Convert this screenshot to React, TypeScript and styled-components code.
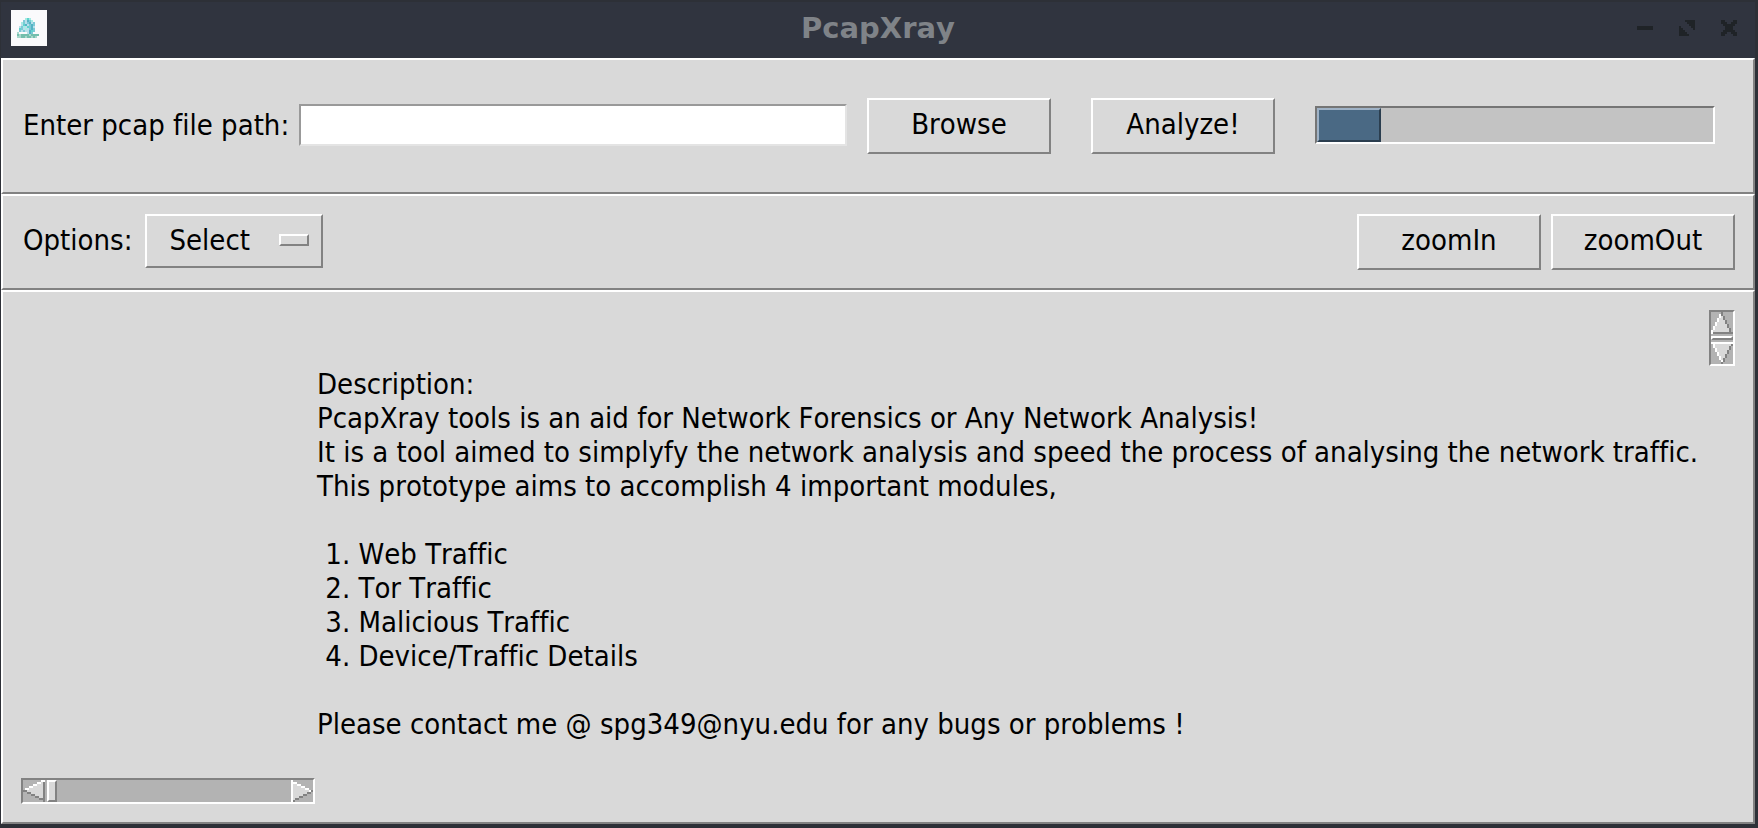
import React from "react";
import styled, { createGlobalStyle, css } from "styled-components";

const color = {
  chrome: "#30343f",
  frame: "#2d3037",
  glyph: "#1f2327",
  title: "#7f8388",
  face: "#d9d9d9",
  light: "#ffffff",
  shade: "#828282",
  trough: "#b3b3b3",
};

const GlobalStyle = createGlobalStyle`
  *, *::before, *::after { box-sizing: border-box; }
  body { margin: 0; background: ${color.frame}; }
  button, input, select {
    font: inherit;
    font-kerning: inherit;
    font-variant-ligatures: inherit;
    color: inherit;
    margin: 0;
    border-radius: 0;
  }
`;

const raised = css`
  border: 2px solid;
  border-color: ${color.light} ${color.shade} ${color.shade} ${color.light};
`;

const sunken = css`
  border: 2px solid;
  border-color: ${color.shade} ${color.light} ${color.light} ${color.shade};
`;

const Window = styled.div`
  display: flex;
  flex-direction: column;
  min-height: 100vh;
  padding: 0 3px 4px 1px;
  background: ${color.frame};
  font: 29px/34px "DejaVu Sans Condensed", "DejaVu Sans", sans-serif;
  font-kerning: none;
  font-variant-ligatures: none;
  color: #000;
`;

const TitleBar = styled.header`
  display: grid;
  grid-template-columns: 1fr auto 1fr;
  align-items: center;
  height: 58px;
  padding: 0 10px 2px;
  background: ${color.chrome};
  box-shadow: inset 0 2px ${color.frame};
`;

const Title = styled.h1`
  margin: 0;
  font-family: "DejaVu Sans", sans-serif;
  font-size: 29px;
  line-height: 34px;
  font-weight: bold;
  color: ${color.title};
`;

const AppIcon = styled.svg`
  display: block;
  width: 36px;
  height: 36px;
  background: #fafafc;
`;

const WindowControls = styled.div`
  display: flex;
  justify-content: flex-end;
  gap: 26px;
  padding-right: 8px;
`;

const ControlButton = styled.button`
  width: 16px;
  height: 16px;
  padding: 0;
  border: 0;
  background: none;

  svg {
    display: block;
    fill: ${color.glyph};
  }
`;

const Panel = styled.section`
  ${raised}
  background: ${color.face};
`;

const FilePanel = styled(Panel)`
  display: flex;
  align-items: center;
  padding: 38px 38px 38px 20px;
`;

const OptionsPanel = styled(Panel)`
  display: flex;
  align-items: flex-start;
  justify-content: space-between;
  padding: 18px 18px 18px 20px;
`;

const ContentPanel = styled(Panel)`
  display: grid;
  flex: 1;
  grid-template-columns: 294px 1fr 26px;
  grid-template-rows: 1fr auto;
  padding: 18px;
`;

const Label = styled.label`
  padding-bottom: 2px;
  margin-right: 10px;
  white-space: nowrap;
`;

const PathInput = styled.input`
  flex: 1;
  min-width: 100px;
  height: 42px;
  margin: 0 20px 2px 0;
  padding: 0 4px;
  background: #fff;
  border: 2px solid;
  border-color: #999 #e4e4e4 #e4e4e4 #999;
  outline: none;
`;

const Button = styled.button`
  ${raised}
  width: 184px;
  height: 56px;
  padding: 0 0 4px;
  background: ${color.face};
`;

const FileActions = styled.div`
  display: flex;
  gap: 40px;
  margin-right: 40px;
`;

const ProgressTrough = styled.div`
  width: 400px;
  height: 38px;
  margin-bottom: 2px;
  background: #c3c3c3;
  border: 2px solid;
  border-color: #757575 #fff #fff #757575;
`;

const ProgressBar = styled.div`
  height: 100%;
  background: #4a6984;
  border: 2px solid;
  border-color: #9fb2c6 #2b3e4f #2b3e4f #9fb2c6;
`;

const OptionField = styled.div`
  display: flex;
  align-items: center;
  gap: 3px;
`;

const SelectBox = styled.div`
  position: relative;

  &::after {
    ${raised}
    content: "";
    position: absolute;
    top: 20px;
    right: 14px;
    width: 30px;
    height: 12px;
    pointer-events: none;
  }
`;

const Select = styled.select`
  ${raised}
  display: block;
  appearance: none;
  width: 178px;
  height: 54px;
  padding: 0 44px 2px 22px;
  background: ${color.face};
`;

const ZoomActions = styled.div`
  display: flex;
  gap: 10px;
`;

const Description = styled.div`
  grid-column: 2;
  padding: 57px 0 34px 2px;
  white-space: pre;

  p, ol {
    margin: 0;
    padding: 0;
  }

  ol {
    margin: 34px 0;
    list-style: none;
  }
`;

const ScrollBar = styled.div<{ $vertical?: boolean }>`
  ${sunken}
  display: flex;
  flex-direction: ${(p) => (p.$vertical ? "column" : "row")};
  justify-content: space-between;
  width: ${(p) => (p.$vertical ? "26px" : "294px")};
  height: ${(p) => (p.$vertical ? "56px" : "26px")};
  background: ${color.trough};
`;

const ScrollButton = styled.button`
  display: block;
  width: 22px;
  height: 22px;
  padding: 0;
  border: 0;
  background: none;

  svg {
    display: block;
  }
`;

const ScrollTrack = styled.div<{ $vertical?: boolean }>`
  flex: 1;
  padding: ${(p) => (p.$vertical ? "2px 0" : "0 2px")};
`;

const ScrollThumb = styled.div<{ $vertical?: boolean }>`
  ${raised}
  width: ${(p) => (p.$vertical ? "22px" : "10px")};
  height: ${(p) => (p.$vertical ? "4px" : "22px")};
  background: ${color.face};
`;

type Direction = "up" | "down" | "left" | "right";

/* Bevelled arrow on an 11x11 grid; left and right are the transposed up and down. */
function Arrow({ direction }: { direction: Direction }) {
  const opensToEnd = direction === "up" || direction === "left";
  const transposed = direction === "left" || direction === "right";
  const rows = Array.from({ length: 10 }, (_, i) => i + 1);
  return (
    <svg width="22" height="22" viewBox="0 0 11 11" shapeRendering="crispEdges" aria-hidden="true">
      <g transform={transposed ? "matrix(0 1 1 0 0 0)" : undefined}>
        {rows.map((r) => {
          const left = opensToEnd ? 5 - Math.ceil(r / 2) : Math.ceil(r / 2);
          const right = opensToEnd ? 5 + Math.floor(r / 2) : 10 - Math.floor(r / 2);
          return (
            <g key={r}>
              <rect x={left} y={r} width={right - left + 1} height="1" fill={color.face} />
              <rect x={left} y={r} width="1" height="1" fill={color.light} />
              <rect x={right} y={r} width="1" height="1" fill={color.shade} />
            </g>
          );
        })}
        {opensToEnd ? (
          <>
            <rect x="5" y="0" width="1" height="1" fill={color.shade} />
            <rect x="1" y="10" width="10" height="1" fill={color.shade} />
          </>
        ) : (
          <rect x="0" y="0" width="11" height="1" fill={color.light} />
        )}
      </g>
    </svg>
  );
}

const logoPalette: Record<string, string> = {
  a: "#a5ece4",
  b: "#7cc9d6",
  c: "#b9dfea",
  d: "#55b3c4",
  e: "#5fd3cd",
  g: "#74bfae",
  h: "#a9d8cc",
};

const logoRows = [
  "....aea....",
  "...bcdba...",
  "..abcbdcb..",
  "..cedcbdb..",
  ".cbacebdc..",
  ".ebcacbdb..",
  ".bcbccdeb..",
  "h....cdb...",
  "ghgggghgggg",
  "hhgghgghgh.",
];

function Logo() {
  return (
    <AppIcon viewBox="0 0 18 18" shapeRendering="crispEdges" aria-hidden="true">
      {logoRows.flatMap((row, y) =>
        [...row].map((c, x) =>
          c === "." ? null : (
            <rect key={`${x}-${y}`} x={x + 3} y={y + 4} width="1" height="1" fill={logoPalette[c]} />
          ),
        ),
      )}
    </AppIcon>
  );
}

const controls = [
  { name: "Minimize", path: "M0 3h8v2h-8z" },
  {
    name: "Maximize",
    path: "M3 0h5v5h-1v-1h-1v-1h-1v-1h-1v-1h-1zM0 3h1v1h1v1h1v1h1v1h1v1h-5z",
  },
  {
    name: "Close",
    path: "M0 0h2v1h1v1h2v-1h1v-1h2v2h-1v1h-1v2h1v1h1v2h-2v-1h-1v-1h-2v1h-1v1h-2v-2h1v-1h1v-2h-1v-1h-1z",
  },
];

const modules = ["Web Traffic", "Tor Traffic", "Malicious Traffic", "Device/Traffic Details"];

export default function App() {
  const progress = 64 / 396;
  return (
    <>
      <GlobalStyle />
      <Window>
        <TitleBar>
          <Logo />
          <Title>PcapXray</Title>
          <WindowControls>
            {controls.map((c) => (
              <ControlButton key={c.name} type="button" aria-label={c.name}>
                <svg width="16" height="16" viewBox="0 0 8 8" shapeRendering="crispEdges">
                  <path d={c.path} />
                </svg>
              </ControlButton>
            ))}
          </WindowControls>
        </TitleBar>

        <FilePanel>
          <Label htmlFor="pcap-path">Enter pcap file path:</Label>
          <PathInput id="pcap-path" type="text" />
          <FileActions>
            <Button type="button">Browse</Button>
            <Button type="button">Analyze!</Button>
          </FileActions>
          <ProgressTrough
            role="progressbar"
            aria-label="Analysis progress"
            aria-valuemin={0}
            aria-valuemax={100}
            aria-valuenow={Math.round(progress * 100)}
          >
            <ProgressBar style={{ width: `${progress * 100}%` }} />
          </ProgressTrough>
        </FilePanel>

        <OptionsPanel>
          <OptionField>
            <Label htmlFor="view-option">Options:</Label>
            <SelectBox>
              <Select id="view-option" defaultValue="Select">
                <option>Select</option>
              </Select>
            </SelectBox>
          </OptionField>
          <ZoomActions>
            <Button type="button">zoomIn</Button>
            <Button type="button">zoomOut</Button>
          </ZoomActions>
        </OptionsPanel>

        <ContentPanel>
          <Description>
            <p>Description:</p>
            <p>PcapXray tools is an aid for Network Forensics or Any Network Analysis!</p>
            <p>It is a tool aimed to simplyfy the network analysis and speed the process of analysing the network traffic.</p>
            <p>This prototype aims to accomplish 4 important modules,</p>
            <ol>
              {modules.map((m, i) => (
                <li key={m}>{` ${i + 1}. ${m}`}</li>
              ))}
            </ol>
            <p>Please contact me @ spg349@nyu.edu for any bugs or problems !</p>
          </Description>
          <ScrollBar $vertical>
            <ScrollButton type="button" aria-label="Scroll up">
              <Arrow direction="up" />
            </ScrollButton>
            <ScrollTrack $vertical>
              <ScrollThumb $vertical />
            </ScrollTrack>
            <ScrollButton type="button" aria-label="Scroll down">
              <Arrow direction="down" />
            </ScrollButton>
          </ScrollBar>
          <ScrollBar>
            <ScrollButton type="button" aria-label="Scroll left">
              <Arrow direction="left" />
            </ScrollButton>
            <ScrollTrack>
              <ScrollThumb />
            </ScrollTrack>
            <ScrollButton type="button" aria-label="Scroll right">
              <Arrow direction="right" />
            </ScrollButton>
          </ScrollBar>
        </ContentPanel>
      </Window>
    </>
  );
}
